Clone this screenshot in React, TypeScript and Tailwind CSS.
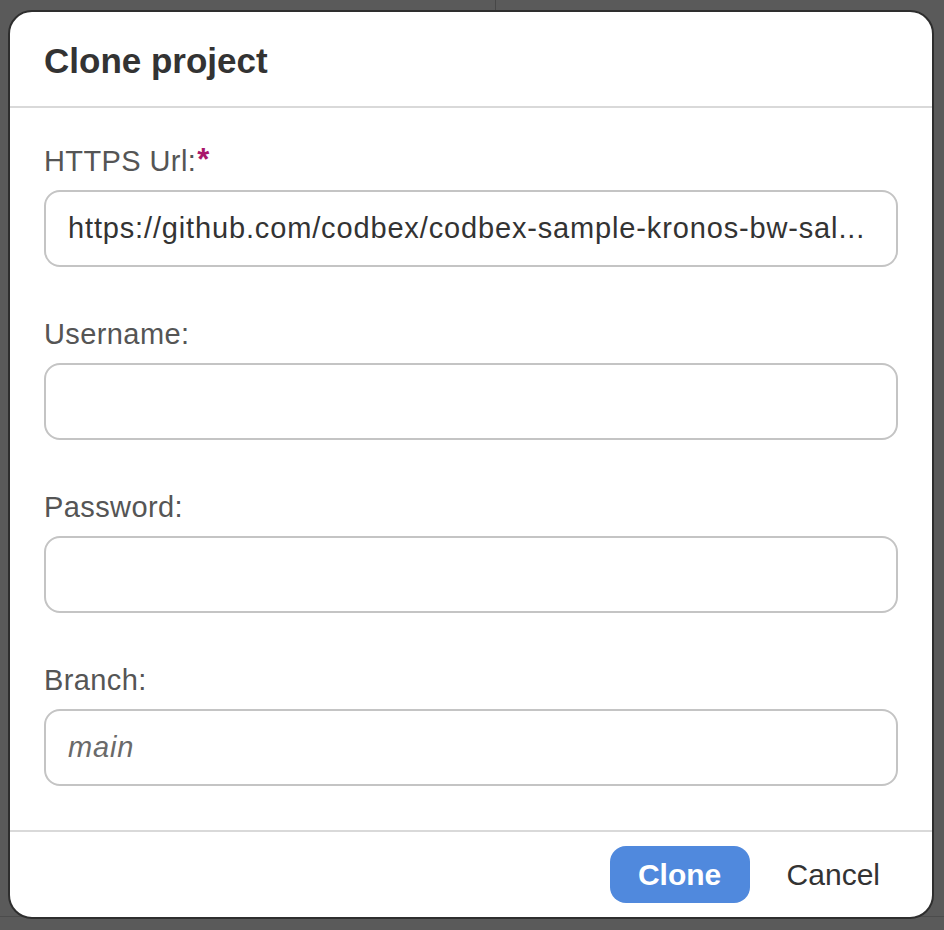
import React from "react";

const font = { fontFamily: '"Liberation Sans", Arial, sans-serif' };

function Field({
  label,
  required,
  value,
  placeholder,
}: {
  label: string;
  required?: boolean;
  value?: string;
  placeholder?: string;
}) {
  return (
    <div className="flex flex-col">
      <label className="flex items-start text-[29px] leading-[32px] tracking-[0.4px] text-[#555555]">
        <span>{label}</span>
        {required && (
          <span className="ml-[1px] font-bold text-[31px] leading-[30px] text-[#a9176b]">*</span>
        )}
      </label>
      <div className="mt-[13px] flex h-[77px] items-center rounded-[16px] border-2 border-[#c4c4c4] bg-white pl-[22px] pr-[10px]">
        <input
          readOnly
          value={value ?? ""}
          placeholder={placeholder}
          className="w-full bg-transparent text-[29px] tracking-[0.85px] text-[#333333] outline-none placeholder:italic placeholder:text-[#6a6a6a]"
          style={font}
        />
      </div>
    </div>
  );
}

export default function App() {
  return (
    <div className="relative h-[930px] w-[944px] overflow-hidden bg-[#5a5a5a]" style={font}>
      <div className="absolute left-0 right-0 top-[916px] h-px bg-[#4c4c4c]" />
      <div className="flex h-[10px]">
        <div className="w-[496px] border-r border-[#474747]" />
      </div>
      <div className="relative z-10 ml-[8px] flex h-[909px] w-[926px] flex-col overflow-hidden rounded-[24px] border-2 border-[#2e2e2e] bg-white">
        <div className="flex h-[94px] items-center px-[34px]">
          <h1 className="pt-[4px] text-[35px] font-bold leading-[40px] text-[#333333]">Clone project</h1>
        </div>
        <div className="h-[2px] bg-[#d9d9d9]" />
        <div className="flex flex-1 flex-col gap-[51px] px-[34px] pt-[37px]">
          <Field
            label="HTTPS Url:"
            required
            value="https://github.com/codbex/codbex-sample-kronos-bw-sal..."
          />
          <Field label="Username:" />
          <Field label="Password:" />
          <Field label="Branch:" placeholder="main" />
        </div>
        <div className="h-[2px] bg-[#d9d9d9]" />
        <div className="flex h-[85px] items-center justify-end gap-[19px] px-[34px]">
          <button className="flex h-[57px] w-[140px] items-center justify-center rounded-[16px] bg-[#5089dd] text-[30px] font-bold text-white">
            Clone
          </button>
          <button className="flex h-[57px] items-center px-[18px] text-[30px] text-[#333333]">
            Cancel
          </button>
        </div>
      </div>
    </div>
  );
}
